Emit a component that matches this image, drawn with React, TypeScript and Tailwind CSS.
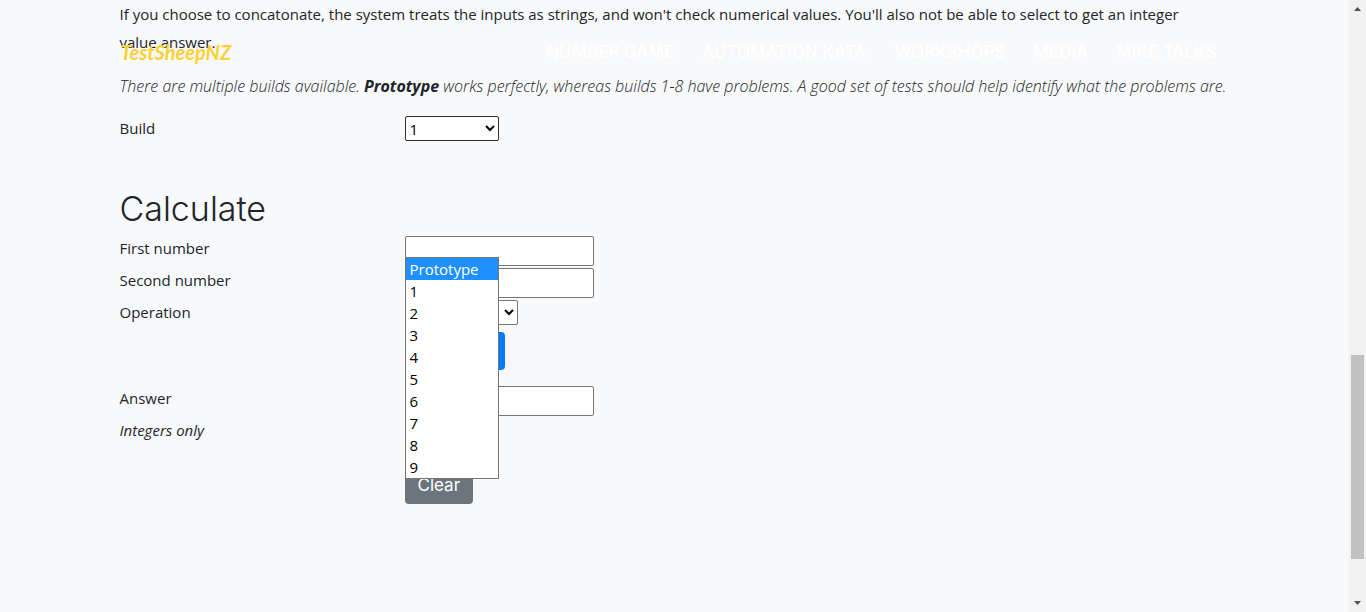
import React, { useState } from 'react';

const navLinks = ['Number Game', 'Automation Kata', 'Workshops', 'Media', 'Mike Talks'];
const builds = ['Prototype', '1', '2', '3', '4', '5', '6', '7', '8', '9'];
const operations = ['Add', 'Subtract', 'Multiply', 'Divide', 'Concatenate'];

const inputClass =
  'block h-[30px] w-[189px] max-w-full rounded-xs border border-[#767676] bg-white px-1 outline-none';
const selectClass = 'block h-[25px] rounded-xs border bg-white text-black outline-none';

function Navbar() {
  return (
    <header className="absolute inset-x-0 top-0 z-10 pt-8">
      <nav className="mx-auto flex h-10 max-w-[1140px] items-center justify-between px-4">
        <a href="#top" className="text-xl font-bold text-[#fed136] italic font-['Lato',sans-serif]">
          TestSheepNZ
        </a>
        <ul className="flex gap-7 pr-3 text-[17px] font-medium text-white uppercase font-['Inter',sans-serif]">
          {navLinks.map((link) => (
            <li key={link}>
              <a href="#top">{link}</a>
            </li>
          ))}
        </ul>
      </nav>
    </header>
  );
}

function Row({ label, htmlFor, className = '', children }: {
  label?: React.ReactNode;
  htmlFor?: string;
  className?: string;
  children: React.ReactNode;
}) {
  return (
    <div className={`-mx-[15px] grid grid-cols-4 ${className}`}>
      <div className="px-[15px]">{label && <label htmlFor={htmlFor}>{label}</label>}</div>
      <div className="col-span-3 px-[15px]">{children}</div>
    </div>
  );
}

function BuildList({ onPick }: { onPick: (build: string) => void }) {
  return (
    <ul
      role="listbox"
      aria-label="Build options"
      className="absolute top-[141px] left-0 z-20 w-[94px] border border-[#767676] bg-white leading-[22px] text-black"
    >
      {builds.map((build, i) => (
        <li
          key={build}
          role="option"
          aria-selected={i === 0}
          onClick={() => onPick(build)}
          className={i === 0 ? 'bg-[#1e90ff] px-1 text-white' : 'px-1'}
        >
          {build}
        </li>
      ))}
    </ul>
  );
}

function Scrollbar() {
  return (
    <div aria-hidden="true" className="sticky top-0 flex h-screen w-[17px] shrink-0 flex-col items-center bg-[#f1f1f1]">
      <svg width="17" height="17" className="shrink-0">
        <path d="M5 11h7L8.500 7z" fill="#505050" />
      </svg>
      <div className="grow-[338]" />
      <div className="w-[13px] grow-[204] bg-[#c1c1c1]" />
      <div className="grow-[36]" />
      <svg width="17" height="17" className="shrink-0">
        <path d="M5 6h7L8.500 10z" fill="#505050" />
      </svg>
    </div>
  );
}

export default function App() {
  const [build, setBuild] = useState('1');

  return (
    <div className="flex min-h-screen bg-[#f8f9fb] text-[15px] leading-6 text-[#212529] font-['Open_Sans',sans-serif]">
      <div className="relative min-w-0 grow">
        <Navbar />
        <main className="mx-auto max-w-[1140px] px-[15px]">
          <p className="mb-4 pr-4 leading-7">
            If you choose to concatonate, the system treats the inputs as strings, and won't check numerical values.
            You'll also not be able to select to get an integer value answer.
          </p>
          <p className="mb-4 text-base leading-7 font-light italic">
            There are multiple builds available. <strong className="font-bold">Prototype</strong> works perfectly,
            whereas builds 1-8 have problems. A good set of tests should help identify what the problems are.
          </p>

          <Row label="Build" htmlFor="build">
            <div className="relative">
              <select
                id="build"
                value={build}
                onChange={(e) => setBuild(e.target.value)}
                className={`${selectClass} w-[94px] border-[#333]`}
              >
                {builds.map((b) => (
                  <option key={b}>{b}</option>
                ))}
              </select>
              <BuildList onPick={setBuild} />
            </div>
          </Row>

          <h2 className="mt-12 mb-2 text-[34px] leading-[39px] font-light font-['Inter',sans-serif]">Calculate</h2>

          <form onSubmit={(e) => e.preventDefault()}>
            <Row label="First number" htmlFor="first" className="mb-0.5">
              <input id="first" type="text" className={inputClass} />
            </Row>
            <Row label="Second number" htmlFor="second" className="mb-0.5">
              <input id="second" type="text" className={inputClass} />
            </Row>
            <Row label="Operation" htmlFor="operation" className="mb-[7px]">
              <select id="operation" className={`${selectClass} w-[113px] border-[#767676]`}>
                {operations.map((o) => (
                  <option key={o}>{o}</option>
                ))}
              </select>
            </Row>
            <Row className="mb-4">
              <button
                type="submit"
                className="h-[38px] rounded-sm bg-[#007bff] px-[13px] text-[17px] text-white font-['Inter',sans-serif]"
              >
                Calculate
              </button>
            </Row>
            <Row label="Answer" htmlFor="answer" className="mb-0.5">
              <input id="answer" type="text" readOnly className={inputClass} />
            </Row>
            <Row label={<em>Integers only</em>} htmlFor="integers" className="mb-6">
              <input id="integers" type="checkbox" />
            </Row>
            <Row>
              <button
                type="reset"
                className="h-[38px] rounded-sm bg-[#6c757d] px-[13px] text-[17px] text-white font-['Inter',sans-serif]"
              >
                Clear
              </button>
            </Row>
          </form>
        </main>
      </div>
      <Scrollbar />
    </div>
  );
}
